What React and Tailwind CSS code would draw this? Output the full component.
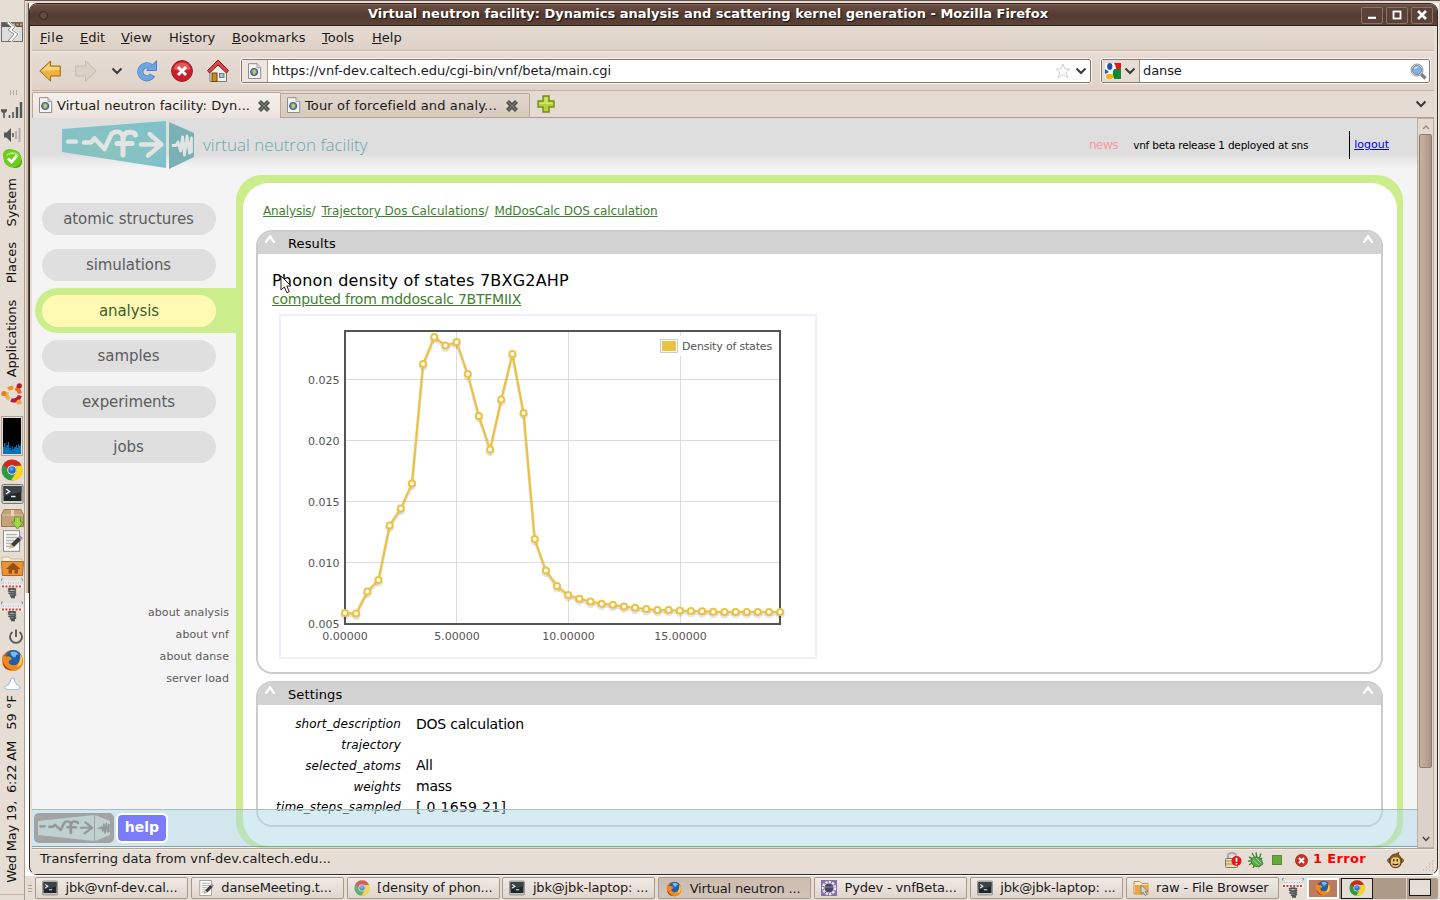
import React from "react";

/* ---------- icons ---------- */

const Chrome = ({ className = "h-4 w-4" }) => (
  <svg viewBox="0 0 22 22" className={className}>
    <circle cx="11" cy="11" r="10.5" fill="#2f9a3f" />
    <path d="M2 6A10.5 10.5 0 0 1 20.5 6.5H11A4.6 4.6 0 0 0 6.6 10Z" fill="#d8231f" />
    <path d="M20.7 6.5A10.5 10.5 0 0 1 10 21.5L15 13.5A4.6 4.6 0 0 0 14 7.2Z" fill="#fbd51b" />
    <circle cx="11" cy="11" r="4.8" fill="#dfe9ee" />
    <circle cx="11" cy="11" r="3.8" fill="#2d6fc4" />
    <circle cx="10.4" cy="10" r="2" fill="#5b9be4" />
  </svg>
);

const Terminal = ({ className = "h-4 w-4" }) => (
  <svg viewBox="0 0 22 20" className={className}>
    <rect x="0.5" y="0.5" width="21" height="19" rx="1.5" fill="#d3d5d0" stroke="#73756f" />
    <rect x="2" y="2" width="18" height="15" fill="#20262a" />
    <path d="M2 2H20V8L2 12Z" fill="#3b4347" />
    <path d="M4.5 5L8 7.5L4.5 10M9.5 12.5H14" stroke="#f0f0f0" strokeWidth="1.5" fill="none" />
  </svg>
);

const Firefox = ({ className = "h-4 w-4" }) => (
  <svg viewBox="0 0 22 22" className={className}>
    <circle cx="11" cy="11" r="10" fill="#d9601a" />
    <circle cx="12" cy="8.5" r="7.5" fill="#1f5fae" />
    <path d="M9 3Q14 1 17 5Q14 5 14 8Q10 8 9 3Z" fill="#79b8e8" />
    <path d="M2 5Q3 8 7 7Q11 8 10 10Q6 11 8 14Q12 17 16 14Q19 11 18 5Q23 10 20 16Q16 22 10 21Q3 20 1.2 13Q0.5 8 2 5Z" fill="#ec8a1e" />
    <path d="M18.5 5Q22 10 19 15Q17 17 15 17Q19 12 18.5 5Z" fill="#fbd04a" />
    <path d="M2 12Q4 19 11 20Q5 21 2.5 16Z" fill="#b83914" />
  </svg>
);

const Spring = ({ className = "h-5 w-5.5" }) => (
  <svg viewBox="0 0 22 20" className={className}>
    <path d="M2 0.5H0.5V2.5M20 0.5H21.5V2.5" stroke="#6d9fd2" fill="none" />
    <path d="M3 2H19L22 8H0Z" fill="#e9ebeb" />
    <path d="M0 8H22" stroke="#f4f4f4" strokeWidth="3.4" />
    <path d="M1 8H21" stroke="#dc3b36" strokeWidth="1.8" strokeDasharray="2 1.4" />
    <path d="M2 4.5H20" stroke="#a9b0b1" strokeDasharray="1 1.5" />
    <path d="M7 11Q11 9.5 15 11M7 12Q11 14.5 15 12M7.5 14.5Q11 16.5 15 14M9 17Q12 18.5 15 16M10 18.9H14" stroke="#4f5557" strokeWidth="1.9" fill="none" />
  </svg>
);

const Notepad = ({ className = "h-4 w-4" }) => (
  <svg viewBox="0 0 22 22" className={className}>
    <rect x="2.5" y="0.7" width="16" height="20.6" fill="#fbfbf8" stroke="#8c8e89" />
    <path d="M5 4.5H16M5 7.5H16M5 10.5H13M5 13.5H11M5 16.5H10" stroke="#b5b5b2" strokeWidth="1.3" />
    <path d="M8.5 18.5L10 14L17 7L20 10L13 17Z" fill="#3c3c3c" />
    <path d="M17 7L19 5.2L21.8 8L20 10Z" fill="#a978c0" />
    <path d="M8.5 18.5L10 14L13 17Z" fill="#e3c08a" />
  </svg>
);

const PageGlobe = () => (
  <svg viewBox="0 0 15 17" className="h-[17px] w-[15px] shrink-0">
    <path d="M1.5 0.7H10L13.7 4.5V15.5H1.5Z" fill="#f4f4f2" stroke="#8d8f8a" />
    <path d="M10 0.7V4.7H14" fill="#dcdcdc" stroke="#8d8f8a" strokeWidth="0.8" />
    <circle cx="7.2" cy="9" r="3.6" fill="#6d86b4" stroke="#3f5486" strokeWidth="1" />
    <path d="M5.6 7.2Q8 5.8 8.5 7.6Q10 9 8 10.8Q7 12.5 6.4 11Q5 9 5.6 7.2Z" fill="#c5cc4c" />
  </svg>
);

const Chevron = () => (
  <svg viewBox="0 0 12 8" className="h-2 w-3 shrink-0">
    <path d="M1.5 1.5L6 6L10.5 1.5" fill="none" stroke="#3a3a38" strokeWidth="2" />
  </svg>
);

const CloseX = () => (
  <svg viewBox="0 0 14 14" className="h-3.5 w-3.5 shrink-0">
    <path d="M2.5 2.5L11.5 11.5M11.5 2.5L2.5 11.5" stroke="#4c4f4b" strokeWidth="4.2" />
    <path d="M3 3L11 11M11 3L3 11" stroke="#777a75" strokeWidth="1.2" />
  </svg>
);

const Folder = ({ className }) => (
  <svg viewBox="0 0 23 21" className={className}>
    <path d="M1 2H8L10 4H21V9H1Z" fill="#f4efe6" stroke="#c9a97a" strokeWidth="0.8" />
    <path d="M0.5 6.5H22.5L21.5 20.5H1.5Z" fill="#e8943a" stroke="#b8651b" />
    <path d="M12 7.5L19.5 14H17V18.5H13.5V15H11V18.5H7.5V14H5Z" fill="#9a5014" />
  </svg>
);

const LogoMarks = ({ stroke }) => (
  <g fill="none" stroke={stroke} strokeLinecap="round" strokeLinejoin="round">
    <path d="M6 20.7H14" strokeWidth="4.2" />
    <path d="M22 21.5H29L32.5 17.5L42.5 28L49.5 13Q52.5 10 57 11Q61 13 61 18" strokeWidth="4.6" />
    <path d="M61 34V18.5Q61.5 11 68 11.2Q73.5 11.6 73.5 14M55 22.5H70" strokeWidth="5" />
    <path d="M79 23.5H99M87.5 13L99.5 23.5L86 34.5" strokeWidth="4.4" />
    <path d="M111 24.5H114L116 21L118.5 30L120.5 16L122.5 34L125 15L127.5 32L129.5 17V31" strokeWidth="2.8" />
  </g>
);

const Logo = () => (
  <svg viewBox="0 0 133 49" className="h-[49px] w-[133px]">
    <defs>
      <radialGradient id="teal" cx="0.45" cy="0.55" r="0.6">
        <stop offset="0" stopColor="#8bc4bc" />
        <stop offset="1" stopColor="#80c1c9" />
      </radialGradient>
    </defs>
    <path d="M0 8L104 0V47L0 31Z" fill="url(#teal)" />
    <path d="M107 1L132 12V36L107 48Z" fill="#79b1b4" />
    <LogoMarks stroke="#e2e3e3" />
  </svg>
);

/* ---------- desktop panel on the left ---------- */

const VText = ({ className, children }) => (
  <div className={`flex shrink-0 items-center justify-center text-[13px] leading-6 whitespace-pre text-[#111] ${className}`}>
    <span className="rotate-180 [writing-mode:vertical-rl]">{children}</span>
  </div>
);

const SidePanel = () => (
  <aside className="flex h-full w-[25px] shrink-0 flex-col items-center overflow-hidden border-r border-[#b09c8c] bg-[#e6ddd5]">
    <svg viewBox="0 0 22 20" className="mt-[22px] h-5 w-[22px] shrink-0">
      <rect x="0.5" y="0.5" width="21" height="19" fill="#dcdedc" stroke="#6e716f" />
      <rect x="1" y="1" width="20" height="4" fill="#565c60" />
      <path d="M12 2.5H14M15.5 2.5H17.5M19 2.5H21" stroke="#e7a43c" strokeWidth="2" />
      <path d="M7 0L13 5L10 8L16 12L10 19" fill="none" stroke="#fff" strokeWidth="3" />
      <path d="M8 0L14 5L11 8L17 12L11 19M5 0.5L10 5L7 8L13 12L7 19" fill="none" stroke="#8e918e" />
    </svg>
    <div className="mt-12 mb-1.5 flex h-[5px] shrink-0 gap-0.5 pl-0.5">
      <i className="w-px bg-[#bba594]" /><i className="w-px bg-[#bba594]" /><i className="w-px bg-[#bba594]" />
    </div>
    <svg viewBox="0 0 22 18" className="h-[18px] w-[22px] shrink-0">
      <path d="M0 9H6M0.5 9.5L3 12L5.5 9.5M3 9V17M8.5 14V17M12 11V17" stroke="#555753" strokeWidth="1.6" fill="none" />
      <path d="M16 6V17M20 1V17" stroke="#555753" strokeWidth="2.4" />
    </svg>
    <svg viewBox="0 0 18 16" className="mt-2 h-4 w-[18px] shrink-0">
      <path d="M1 5.5H3.5L8 1V15L3.5 10.5H1Z" fill="#555753" />
      <path d="M10 6V10" stroke="#555753" strokeWidth="1.5" />
      <path d="M13 4V12M16.5 1V15" stroke="#b5aea8" strokeWidth="2" />
    </svg>
    <svg viewBox="0 0 21 21" className="mt-[5px] h-[21px] w-[21px] shrink-0">
      <rect x="1" y="1" width="13" height="13" rx="6" fill="#6fc51c" />
      <rect x="7" y="7" width="13" height="13" rx="6" fill="#4fae10" />
      <circle cx="10.5" cy="10.5" r="9" fill="#70cc1d" />
      <path d="M4 8A7 6 0 0 1 17 8Q10 4 4 8Z" fill="#b8ec7c" />
      <path d="M6 10.5L9.5 14L15 7.5" fill="none" stroke="#fff" strokeWidth="2.8" />
    </svg>
    <VText className="mt-[9px] h-12">System</VText>
    <VText className="mt-4 h-[42px]">Places</VText>
    <VText className="mt-4 h-[77px] tracking-[-0.18px]">Applications</VText>
    <svg viewBox="0 0 22 22" className="mt-1.5 h-[22px] w-[22px] shrink-0">
      <g fill="none" strokeWidth="4">
        <path d="M7.2 6.2A6.3 6.3 0 0 1 12.2 4.8" stroke="#f0932b" />
        <path d="M14.5 5.2A6.3 6.3 0 0 1 18.8 10.5" stroke="#ea6a20" />
        <path d="M18.8 12.5A6.3 6.3 0 0 1 10 17" stroke="#b01c36" />
        <path d="M8.3 16A6.3 6.3 0 0 1 6 9" stroke="#f6ad4d" />
      </g>
      <circle cx="2.8" cy="10.5" r="2.6" fill="#e97c2c" />
      <circle cx="18.3" cy="2.8" r="2.6" fill="#b01c36" />
      <circle cx="18" cy="19" r="2.6" fill="#f6a24a" />
    </svg>
    <svg viewBox="0 0 22 40" className="mt-[11px] h-10 w-[22px] shrink-0">
      <rect x="0.5" y="0.5" width="21" height="39" fill="#e6ddd5" stroke="#b5a193" />
      <rect x="2" y="2" width="18" height="36" fill="#000" />
      <path d="M2 38V31H3V27H4V33L5 25L6 33V29H7V26H8V32H9V28L10 34H11V30H12V33H13V31H15V29H16V32H17V28H18V30H19V25L20 31V38Z" fill="#0772b5" />
    </svg>
    <Chrome className="mt-[3px] h-[22px] w-[22px] shrink-0" />
    <Terminal className="mt-[3px] h-5 w-[23px] shrink-0" />
    <svg viewBox="0 0 23 21" className="mt-[5px] h-[21px] w-[23px] shrink-0">
      <path d="M3 0.5H20L22.5 6V17.5H0.5V6Z" fill="#c5a37a" stroke="#9b7b54" />
      <path d="M1 6H22" stroke="#dcc39f" />
      <path d="M10 1H13V7H10Z" fill="#e7d8bc" />
      <path d="M13.5 8H19.5V13H22.5L16.5 20L10.5 13H13.5Z" fill="#a4d44a" stroke="#5f9a1e" />
    </svg>
    <Notepad className="h-[22px] w-[22px] shrink-0" />
    <Folder className="mt-[3px] h-[21px] w-[23px] shrink-0" />
    <Spring className="mt-0.5 h-[21px] w-[22px] shrink-0" />
    <Spring className="mt-0.5 h-[21px] w-[22px] shrink-0" />
    <svg viewBox="0 0 16 16" className="mt-[7px] ml-2 h-4 w-4 shrink-0">
      <path d="M4.5 3A6 6 0 1 0 11.5 3M8 0.5V8" fill="none" stroke="#555753" strokeWidth="1.8" />
    </svg>
    <Firefox className="mt-1 h-[23px] w-[23px] shrink-0" />
    <svg viewBox="0 0 17 14" className="mt-[5px] h-3.5 w-[17px] shrink-0">
      <path d="M3 12.5Q0 11.5 1 9.5Q3 8.5 4.5 7.5Q5 5 6.5 4.5Q6 1 8.5 1Q11 1 10.5 4.5Q12 5 12.5 7.5Q15.5 8.5 16 10.5Q15.5 12.5 14 12.5Z" fill="#fdfeff" stroke="#a9c1e4" strokeWidth="1.2" />
    </svg>
    <VText className="mt-1 h-[34px]">59 °F</VText>
    <VText className="mt-[11px] h-[143px] tracking-[-0.2px]">{"Wed May 19,  6:22 AM"}</VText>
    <div className="mt-[11px] h-px w-6 shrink-0 bg-[#c6b5a6]" />
  </aside>
);

/* ---------- browser chrome ---------- */

const TitleButton = ({ children }) => (
  <span className="flex h-[17px] w-[22px] items-center justify-center rounded-xs border border-[#8a7267] bg-[#5b4238]">
    <svg viewBox="0 0 12 12" className="h-3 w-3">{children}</svg>
  </span>
);

const TitleBar = () => (
  <div className="flex h-[22px] shrink-0 items-center rounded-t-md border-t border-b border-t-[#7d6054] border-b-[#2c1f1a] bg-linear-to-b from-[#6e4f43] via-[#523b33] to-[#5c4338] pl-[9px]">
    <span className="h-[9px] w-[9px] shrink-0 rounded-full border-[1.5px] border-[#382720] bg-[#654c42]" />
    <div className="flex-1 pb-[3px] pl-[7px] text-center text-[13px] leading-[17px] font-bold whitespace-nowrap text-white [text-shadow:1px_1px_1px_#1c1310]">
      Virtual neutron facility: Dynamics analysis and scattering kernel generation - Mozilla Firefox
    </div>
    <div className="flex gap-[3px] pr-1">
      <TitleButton><path d="M2 8.8H10" stroke="#fff" strokeWidth="2.2" /></TitleButton>
      <TitleButton><rect x="2.5" y="2.5" width="7" height="7" fill="none" stroke="#fff" strokeWidth="1.8" /></TitleButton>
      <TitleButton><path d="M2 2L10 10M10 2L2 10" stroke="#fff" strokeWidth="2.6" /></TitleButton>
    </div>
  </div>
);

const MenuBar = () => (
  <div className="flex h-[25px] shrink-0 items-center border-b border-[#c9b7a9] bg-linear-to-b from-[#e6dbd2] to-[#ddd1c7] pl-2 text-[13px] text-[#1a1a1a]">
    <span className="w-10 tracking-[0.5px]"><u>F</u>ile</span>
    <span className="w-[41px]"><u>E</u>dit</span>
    <span className="w-12"><u>V</u>iew</span>
    <span className="w-[63px]">Hi<u>s</u>tory</span>
    <span className="w-[90px] tracking-[0.1px]"><u>B</u>ookmarks</span>
    <span className="w-[50px]"><u>T</u>ools</span>
    <span><u>H</u>elp</span>
  </div>
);

const NavBar = () => (
  <div className="flex h-10 shrink-0 items-center border-t border-b border-t-[#f1e9e2] border-b-[#c3b0a2] bg-linear-to-b from-[#e6dcd4] to-[#dfd3c9] pl-[7px]">
    <svg viewBox="0 0 22 22" className="h-[22px] w-[22px]">
      <path d="M0.8 11L11.5 1V6H21.3V16H11.5V21Z" fill="#eeb33c" stroke="#9b6c12" />
      <path d="M2.5 11L10.5 3.5V7H20.3V10Z" fill="#f8d47d" />
    </svg>
    <svg viewBox="0 0 22 22" className="ml-3.5 h-[22px] w-[22px]">
      <path d="M21.2 11L10.5 1V6H0.7V16H10.5V21Z" fill="#dcd1c7" stroke="#c6bbb0" />
    </svg>
    <div className="ml-3.5 flex w-3"><Chevron /></div>
    <svg viewBox="0 0 22 22" className="ml-3 h-[22px] w-[22px]">
      <path d="M15.5 6.5A6.5 6.5 0 1 0 17.5 15" fill="none" stroke="#4d84c6" strokeWidth="6.2" />
      <path d="M21.5 0.8V10.5H11.5Z" fill="#6ca5e0" stroke="#4d84c6" />
      <path d="M15.5 6.5A6.5 6.5 0 1 0 17 15.5" fill="none" stroke="#6ca5e0" strokeWidth="4.8" />
    </svg>
    <svg viewBox="0 0 22 22" className="ml-3.5 h-[22px] w-[22px]">
      <circle cx="11" cy="11" r="10.4" fill="#cc1f2c" stroke="#98131c" />
      <path d="M2.5 9A8.8 8.8 0 0 1 19.5 9Q11 13 2.5 9Z" fill="#e25a5e" />
      <path d="M7 7L15 15M15 7L7 15" stroke="#fff" strokeWidth="3" />
    </svg>
    <svg viewBox="0 0 22 24" className="ml-3.5 h-6 w-[22px]">
      <path d="M3 11V22.5H19.5V11L11 3Z" fill="#f1f0ec" stroke="#77786f" />
      <rect x="5" y="14" width="5" height="8.5" fill="#c8881c" stroke="#70490b" />
      <rect x="12.5" y="14.5" width="4.5" height="4" fill="#9ec3dc" stroke="#5f6a70" strokeWidth="0.8" />
      <path d="M11 1L21.5 11.5L19.5 14L11 6L2.5 14L0.5 11.5Z" fill="#d4474a" stroke="#98181b" />
    </svg>
    <div className="ml-3 flex h-[24px] w-[850px] items-center rounded-xs border border-[#8a7768] bg-white outline outline-[#f8f3ee]">
      <div className="mr-1 flex h-full w-[26px] items-center justify-center border-r border-[#b3a294] bg-[#eee6df]"><PageGlobe /></div>
      <span className="flex-1 text-[13px] tracking-[-0.03px] text-[#1a1a1a]">https://vnf-dev.caltech.edu/cgi-bin/vnf/beta/main.cgi</span>
      <svg viewBox="0 0 16 16" className="h-4 w-4">
        <path d="M8 1L10 6H15L11.2 9.3L12.8 14.7L8 11.6L3.2 14.7L4.8 9.3L1 6H6Z" fill="#fff" stroke="#cfcfcf" />
      </svg>
      <div className="mr-[3px] ml-1 flex"><Chevron /></div>
    </div>
    <div className="ml-2.5 flex h-[24px] w-[329px] items-center rounded-xs border border-[#8a7768] bg-white outline outline-[#f8f3ee]">
      <div className="flex h-full w-[38px] items-center gap-[3px] border-r border-[#a58e7c] bg-[#e6ddd5] pl-[3px]">
        <svg viewBox="0 0 16 16" className="h-4 w-4">
          <rect width="16" height="16" rx="1" fill="#fff" />
          <path d="M9 0H16V6H11Q11 3 9 0Z" fill="#e7141a" />
          <path d="M9 6H16V16H9Q7 12 8 8Z" fill="#0c8a38" />
          <ellipse cx="4.8" cy="3.4" rx="2.6" ry="3.4" fill="#1b50b4" />
          <path d="M0 6L4 9L0 11Z" fill="#1b50b4" />
          <ellipse cx="4.6" cy="13.4" rx="3.8" ry="2.6" fill="#f5b011" />
        </svg>
        <Chevron />
      </div>
      <span className="flex-1 pl-[3px] text-[13px] tracking-[-0.1px] text-[#1a1a1a]">danse</span>
      <svg viewBox="0 0 17 17" className="mr-0.5 h-[17px] w-[17px]">
        <path d="M10.5 10.5L15.5 15.5" stroke="#80807c" strokeWidth="3.2" />
        <circle cx="7" cy="7" r="6" fill="#e4e6e4" stroke="#85898a" strokeWidth="0.9" />
        <circle cx="7" cy="7" r="4.5" fill="#86b2e2" stroke="#54749c" strokeWidth="0.8" />
        <path d="M4 6.5A3.2 3.2 0 0 1 9 4Q6 4.5 4 6.5Z" fill="#d8e9f8" />
      </svg>
    </div>
  </div>
);

const TabBar = () => (
  <div className="flex h-[27px] shrink-0 items-end bg-[#e5dbd2] shadow-[inset_0_-1px_0_#b09a8a]">
    <div className="flex h-[26px] w-[249px] items-center rounded-t-xs border border-b-0 border-[#b8a596] bg-linear-to-b from-[#f5f0ec] to-[#ece3dc] pl-[5px]">
      <PageGlobe />
      <span className="ml-1 flex-1 text-[13px] tracking-[0.07px] whitespace-nowrap text-[#1a1a1a]">Virtual neutron facility: Dyn...</span>
      <div className="mr-[9px]"><CloseX /></div>
    </div>
    <div className="flex h-[25px] w-[249px] items-center rounded-tr-xs border border-l-0 border-[#b8a596] bg-linear-to-b from-[#e2d7cd] to-[#d6cabe] pl-[5px]">
      <PageGlobe />
      <span className="ml-1 flex-1 text-[13px] tracking-[0.14px] whitespace-nowrap text-[#1a1a1a]">Tour of forcefield and analy...</span>
      <div className="mr-2.5"><CloseX /></div>
    </div>
    <svg viewBox="0 0 18 18" className="mb-[5px] ml-[7px] h-[18px] w-[18px]">
      <path d="M6 1H12V6H17V12H12V17H6V12H1V6H6Z" fill="#b6d33c" stroke="#6f8f1c" strokeWidth="1.4" />
      <path d="M7.5 2.5H10.5V7.5H15.5V9H2.5V7.5H7.5Z" fill="#d2e56c" />
    </svg>
    <div className="mr-[7px] mb-2.5 ml-auto flex"><Chevron /></div>
  </div>
);

const Scrollbar = () => (
  <div className="flex w-[17px] shrink-0 flex-col border border-[#c0ae9f] bg-[#dcd2c9]">
    <div className="flex h-[15px] items-center justify-center bg-[#e3d9d0]">
      <svg viewBox="0 0 8 6" className="h-1.5 w-2"><path d="M1 5L4 2L7 5" fill="none" stroke="#9c8c80" strokeWidth="1.3" /></svg>
    </div>
    <div className="mx-px h-[634px] rounded-xs border border-[#8f7c6d] bg-linear-to-r from-[#c5b3a4] via-[#b9a697] to-[#a79483]" />
    <div className="mt-auto flex h-[17px] items-center justify-center">
      <svg viewBox="0 0 8 6" className="h-1.5 w-2"><path d="M0.8 1L4 4.4L7.2 1" fill="none" stroke="#4a433d" strokeWidth="1.5" /></svg>
    </div>
  </div>
);

/* ---------- web page ---------- */

const PageHeader = () => (
  <header className="flex h-[57px] shrink-0 items-start bg-[linear-gradient(#dedede_36px,#e6e6e6_41px,#f4f4f4_50px)] pl-[30px]">
    <div className="mt-[3px]"><Logo /></div>
    <span className="mt-[13px] ml-2 font-['Open_Sans',sans-serif] text-[17px] leading-7 font-light text-[#6ba6b0]">virtual neutron facility</span>
    <span className="mt-[19px] ml-auto text-[12px] leading-4 tracking-[-0.45px] text-[#f79c9c]">news</span>
    <span className="mt-[19px] ml-[15px] text-[10.5px] leading-4 tracking-[-0.2px] text-black">vnf beta release 1 deployed at sns</span>
    <span className="mt-[13px] ml-[41px] h-7 border-l border-black" />
    <a className="mt-[19px] mr-[28px] ml-1 text-[11px] leading-4 text-[#0000ee] underline">logout</a>
  </header>
);

const NavPill = ({ className = "", children }) => (
  <a className={`flex h-8 w-[174px] items-center justify-center rounded-full bg-[#dfdfdf] pt-px pr-px text-[15px] tracking-[-0.08px] text-[#5c5c5c] ${className}`}>
    {children}
  </a>
);

const Sidebar = () => (
  <nav className="flex w-[204px] shrink-0 flex-col pt-7">
    <NavPill className="ml-2.5">atomic structures</NavPill>
    <NavPill className="mt-3.5 ml-2.5">simulations</NavPill>
    <div className="mt-[7px] ml-[3px] flex h-[45px] items-center rounded-l-full bg-[#cbed8b] pl-[7px]">
      <a className="flex h-8 w-[174px] items-center justify-center rounded-full bg-[#fff9b4] pt-px text-[15px] tracking-[-0.08px] text-[#3a5f30]">analysis</a>
    </div>
    <NavPill className="mt-[7px] ml-2.5">samples</NavPill>
    <NavPill className="mt-3.5 ml-2.5">experiments</NavPill>
    <NavPill className="mt-[13px] ml-2.5">jobs</NavPill>
    <div className="mt-[139px] flex flex-col items-end pr-[7px] text-[11px] leading-[22px] tracking-[0.09px] text-[#5a5a5a]">
      <a>about analysis</a>
      <a>about vnf</a>
      <a>about danse</a>
      <a>server load</a>
    </div>
  </nav>
);

const Caret = () => (
  <svg viewBox="0 0 12 8" className="mt-[3px] h-2 w-3">
    <path d="M1.5 7.8L6 1.5L10.5 7.8" fill="none" stroke="#fff" strokeWidth="2.4" />
  </svg>
);

const Panel = ({ title, className, children }) => (
  <section className={`flex flex-col overflow-hidden rounded-[16px] border-2 border-[#ccc] bg-white ${className}`}>
    <div className="flex h-[22px] shrink-0 items-start bg-[#d2d2d2] pr-[7px] pl-1.5">
      <Caret />
      <h2 className="ml-3 flex-1 text-[13px] leading-6 tracking-[0.12px] text-black">{title}</h2>
      <Caret />
    </div>
    {children}
  </section>
);

const POINTS = [
  613, 613.5, 591.5, 580, 525.5, 508.5, 483.5, 364, 337, 345.5, 342, 374, 416, 449.5, 399.5, 354, 413, 539, 570.5, 586,
  595, 598.7, 601.5, 603.7, 604.8, 606.5, 607.7, 609, 610, 610, 610.5, 611, 611.3, 611.7, 612, 612, 612, 612, 612, 612,
].map((y, i) => [345 + i * 11.16, y]);
const LINE = POINTS.map((p) => p.join(",")).join(" ");

const Chart = () => (
  <svg viewBox="281 316 534 341" className="ml-[21px] h-[345px] w-[538px] border-2 border-[#eef]" fontFamily="'DejaVu Sans', sans-serif" fontSize="11">
    <path d="M456.5 331V624M568.5 331V624M680.5 331V624M345 379.5H780M345 440.5H780M345 501.5H780M345 562.5H780" stroke="#dcdcdc" fill="none" />
    <rect x="657" y="336" width="119" height="20" fill="#fff" />
    <rect x="345" y="331" width="435" height="293" fill="none" stroke="#545454" strokeWidth="2" />
    <g fill="none" stroke="#000" strokeOpacity="0.1" strokeWidth="3" transform="translate(0 2)">
      <polyline points={LINE} />
      {POINTS.map(([x, y]) => <circle key={x} cx={x} cy={y} r="3" />)}
    </g>
    <polyline points={LINE} fill="none" stroke="#edc240" strokeWidth="2.2" />
    {POINTS.map(([x, y]) => <circle key={x} cx={x} cy={y} r="3" fill="#fff" stroke="#edc240" strokeWidth="2" />)}
    <g fill="#545454" textAnchor="end">
      <text x="339.5" y="384">0.025</text>
      <text x="339.5" y="445">0.020</text>
      <text x="339.5" y="506">0.015</text>
      <text x="339.5" y="567">0.010</text>
      <text x="339.5" y="628">0.005</text>
    </g>
    <g fill="#545454" textAnchor="middle">
      <text x="345" y="640">0.00000</text>
      <text x="457" y="640">5.00000</text>
      <text x="568.5" y="640">10.00000</text>
      <text x="680.5" y="640">15.00000</text>
    </g>
    <rect x="660.5" y="339.5" width="17" height="13" fill="#fff" stroke="#ccc" />
    <rect x="662" y="341" width="14" height="10" fill="#edc240" />
    <text x="682" y="350" fill="#545454" letterSpacing="-0.18">Density of states</text>
  </svg>
);

const SETTINGS = [
  ["short_description", "DOS calculation"],
  ["trajectory", ""],
  ["selected_atoms", "All"],
  ["weights", "mass"],
];

const SettingRow = ({ label, children }) => (
  <div className="flex h-[20.75px] items-center">
    <span className="w-[143px] text-right text-[12px] tracking-[0.13px] text-black italic">{label}</span>
    {children}
  </div>
);

const Content = () => (
  <main className="mr-3.5 flex w-[1167px] flex-col rounded-[26px] bg-[#cbed8b] pt-2 pr-1.5 pb-0.5 pl-[7px]">
    <div className="flex flex-1 flex-col rounded-[26px] bg-white pl-[13px]">
      <div className="mt-5 flex h-4 items-center pl-[7px] text-[12px] leading-4 text-[#3f8130]">
        <a className="tracking-[-0.12px] underline">Analysis</a><span>/</span>
        <a className="ml-1.5 underline">Trajectory Dos Calculations</a><span>/</span>
        <a className="ml-1.5 tracking-[-0.1px] underline">MdDosCalc DOS calculation</a>
      </div>
      <Panel title="Results" className="mt-[11px] h-[444px] w-[1127px]">
        <div className="relative mt-[17px] ml-3.5 w-fit text-[16px] leading-[19px] tracking-[0.2px] text-black">
          Phonon density of states 7BXG2AHP
          <svg viewBox="0 0 12 19" className="absolute top-[4px] left-2 h-[19px] w-3">
            <path d="M1 1V15L4.3 12L6.8 17.8L9.3 16.7L6.8 11H11Z" fill="#fff" stroke="#222" />
          </svg>
        </div>
        <a className="ml-3.5 text-[14px] leading-[18px] tracking-[-0.24px] text-[#3f8130] underline">computed from mddoscalc 7BTFMIIX</a>
        <div className="mt-1.5 flex"><Chart /></div>
      </Panel>
      <Panel title="Settings" className="mt-[7px] h-[146px] w-[1127px]">
        <div className="mt-[9px]">
          {SETTINGS.map(([label, value]) => (
            <SettingRow key={label} label={label}>
              <span className="ml-[15px] text-[14px] tracking-[-0.22px] text-black">{value}</span>
            </SettingRow>
          ))}
          <SettingRow label="time_steps_sampled">
            <span className="ml-[15px] text-[14px] tracking-[0.3px] text-black">[ 0 1659 21]</span>
          </SettingRow>
        </div>
      </Panel>
    </div>
  </main>
);

const HelpBar = () => (
  <div className="absolute inset-x-0 bottom-px flex h-[38px] items-center gap-[3px] border-t border-b border-t-[#a8bcc0] border-b-[#7fa3ad] bg-[#add8e6]/50 pb-px pl-0.5">
    <svg viewBox="0 0 80 30" className="h-[30px] w-20">
      <rect width="80" height="30" rx="5" fill="#a2a4a4" />
      <path d="M4 8L60 2V28L4 22ZM61 2L76 8V22L61 28Z" fill="#bfd0d0" />
      <g transform="translate(3 3) scale(0.555 0.5)"><LogoMarks stroke="#929898" /></g>
    </svg>
    <span className="-ml-px flex h-[30px] w-[52px] items-center justify-center rounded-md border-2 border-white bg-[#7b7bfb] text-[14px] font-bold text-white">help</span>
  </div>
);

/* ---------- status bar and taskbar ---------- */

const StatusBar = () => (
  <div className="flex h-[26px] shrink-0 items-center border-t border-[#b5a394] bg-[#e6ddd5] pl-2 text-[13px] text-[#1a1a1a] shadow-[inset_0_1px_0_#f3ede8]">
    <span className="flex-1 pb-1.5 tracking-[0.04px]">Transferring data from vnf-dev.caltech.edu...</span>
    <svg viewBox="0 0 17 16" className="mb-[3px] h-4 w-[17px]">
      <path d="M3 7V3.5Q3 1 7 1Q11 1 11 3.5V7" fill="none" stroke="#a8a8a4" strokeWidth="2" />
      <rect x="0.5" y="6.5" width="12" height="9" rx="1" fill="#ecdfa5" stroke="#777" />
      <path d="M1 9H12M1 12H12" stroke="#a58a3a" />
      <circle cx="11.5" cy="9" r="5" fill="#e0161c" />
      <path d="M11.5 5.8V9.8M11.5 11V12.4" stroke="#fff" strokeWidth="1.7" />
    </svg>
    <svg viewBox="0 0 17 17" className="mb-[3px] ml-[5px] h-[17px] w-[17px]">
      <path d="M2 5L6 7M5 1L8 6M9 0.5L10 6M14 1.5L12 7M1 9H5M2 13L6 10M6 16L8 12M15 6L13 9" stroke="#3e8e30" strokeWidth="1.4" />
      <path d="M4 7Q9 3 14 7L16 12L12 15L7 14Q4 12 4 7Z" fill="#58a949" stroke="#2f7524" strokeWidth="0.8" />
      <path d="M6 8L12 13M9 6L14 11" stroke="#a4d892" />
    </svg>
    <span className="mb-[3px] ml-2 h-2.5 w-2.5 border border-[#5b8b35] bg-[#68a83c]" />
    <svg viewBox="0 0 13 13" className="mb-[3px] ml-[13px] h-[13px] w-[13px]">
      <circle cx="6.5" cy="6.5" r="6" fill="#c8342a" stroke="#93211b" strokeWidth="0.8" />
      <path d="M4 4L9 9M9 4L4 9" stroke="#fff" strokeWidth="2" />
    </svg>
    <b className="ml-[5px] pb-1.5 tracking-[0.34px] text-[#f00]">1 Error</b>
    <svg viewBox="0 0 17 17" className="mb-[3px] ml-[21px] h-[17px] w-[17px]">
      <circle cx="2.5" cy="8.5" r="2" fill="#b07430" stroke="#4a2c10" strokeWidth="0.7" />
      <circle cx="14.5" cy="8.5" r="2" fill="#b07430" stroke="#4a2c10" strokeWidth="0.7" />
      <path d="M2.5 7Q4 2 9 2L12 0.5L11 2.5Q14 4 14.5 8Q15 15.5 8.5 15.8Q2 15.5 2.5 7Z" fill="#8c5a22" stroke="#4a2c10" strokeWidth="0.8" />
      <path d="M4 8Q5 4.5 8.5 5.6Q12 4.5 13 8Q14 14.8 8.5 14.9Q3 14.8 4 8Z" fill="#f2c878" />
      <path d="M6.8 7V9.5M10.2 7V9.5M5.5 11.8Q8.5 13.8 11.5 11.8" fill="none" stroke="#2c1a08" strokeWidth="1.2" />
    </svg>
    <svg viewBox="0 0 12 12" className="mt-1.5 ml-[18px] h-3 w-3">
      <path d="M1 11H12M4 8H12M7 5H12M10 2H12" stroke="#b5a496" strokeDasharray="1 2" />
    </svg>
  </div>
);

const Eclipse = () => (
  <svg viewBox="0 0 16 16" className="h-4 w-4">
    <rect width="16" height="16" fill="#8672a8" />
    <circle cx="8" cy="8" r="6" fill="#3a3156" stroke="#e8e6ee" strokeWidth="2.4" strokeDasharray="2.4 1" />
    <circle cx="8" cy="8" r="5" fill="#4a4168" stroke="#dcd9e4" />
    <path d="M4 7H12" stroke="#8d88a5" />
  </svg>
);

const FileBrowser = () => (
  <svg viewBox="0 0 17 16" className="h-4 w-[17px]">
    <path d="M1 1.5H7L9 3.5H15V14H1Z" fill="#f7eedd" stroke="#c39445" />
    <path d="M2 5H15V14.5H2Z" fill="#eba944" />
    <path d="M8 5V14L10 12L12 15.5L14 14.5L12 11.2H15Z" fill="#d4d6d4" stroke="#76797a" strokeWidth="0.8" />
  </svg>
);

const TaskButton = ({ icon, active, children }) => (
  <div className={`flex h-[22px] w-[153px] shrink-0 items-center rounded-xs border border-[#a99a8e] ${active ? "bg-linear-to-b from-[#cdbdb0] to-[#d2c4b9] pt-px pl-[7px]" : "bg-linear-to-b from-[#f0e9e4] to-[#e0d6ce] pl-1.5"}`}>
    <span className="flex w-[23.5px] shrink-0">{icon}</span>
    <span className="text-[13px] tracking-[-0.17px] whitespace-nowrap text-[#1a1a1a]">{children}</span>
  </div>
);

const Taskbar = () => (
  <footer className="flex h-6 shrink-0 items-center overflow-hidden bg-[#e6ddd5]">
    <div className="flex w-2.5 shrink-0 flex-col items-center gap-0.5">
      <i className="h-px w-1 bg-[#b5a293]" /><i className="h-px w-1 bg-[#b5a293]" /><i className="h-px w-1 bg-[#b5a293]" />
    </div>
    <div className="flex shrink-0 gap-[2.8px]">
      <TaskButton icon={<Terminal />}>jbk@vnf-dev.cal...</TaskButton>
      <TaskButton icon={<Notepad />}>danseMeeting.t...</TaskButton>
      <TaskButton icon={<Chrome className="h-4 w-4 opacity-70" />}>[density of phon...</TaskButton>
      <TaskButton icon={<Terminal />}>jbk@jbk-laptop: ...</TaskButton>
      <TaskButton icon={<Firefox />} active>Virtual neutron ...</TaskButton>
      <TaskButton icon={<Eclipse />}>Pydev - vnfBeta...</TaskButton>
      <TaskButton icon={<Terminal />}>jbk@jbk-laptop: ...</TaskButton>
      <TaskButton icon={<FileBrowser />}>raw - File Browser</TaskButton>
    </div>
    <Spring className="ml-[3px] h-5 w-[22px] shrink-0" />
    <div className="ml-[3px] flex h-[21px] w-[131px] shrink-0 gap-0.5 rounded-xs bg-[#ad9a88]">
      <div className="flex w-8 items-center justify-center border-2 border-white bg-[#bd7a5e]"><Firefox className="h-4 w-4" /></div>
      <div className="flex w-8 items-center justify-center border border-[#1a1a1a] bg-[#e6ddd5]"><Chrome className="h-4 w-4" /></div>
      <div className="w-8 border-r border-[#e0d5ca]" />
      <div className="mt-px h-[17px] w-[22px] border border-[#1a1a1a] bg-[#e6ddd5]" />
    </div>
  </footer>
);

export default function App() {
  return (
    <div className="flex h-[900px] w-[1440px] overflow-hidden bg-white font-['DejaVu_Sans',sans-serif]">
      <SidePanel />
      <div className="flex min-w-0 flex-1 flex-col">
        <div className="h-[3px] shrink-0 border-t border-[#6b5248] bg-[#e6dbd3]" />
        <div className="flex h-[872px] shrink-0">
          <div className="h-[590px] w-1 border-r border-l border-r-[#5a4a42] border-l-[#eee7e1] bg-[#cbbcae]" />
          <div className="flex h-[872px] w-[1409px] flex-col rounded-lg border border-[#332a26] bg-[#e6ddd5]">
            <TitleBar />
            <div className="flex min-h-0 flex-1 flex-col pr-[3px] pl-0.5">
              <MenuBar />
              <NavBar />
              <TabBar />
              <div className="flex h-[730px] shrink-0">
                <div className="relative flex w-[1385px] shrink-0 flex-col bg-[#f4f4f4]">
                  <PageHeader />
                  <div className="flex min-h-0 flex-1">
                    <Sidebar />
                    <Content />
                  </div>
                  <HelpBar />
                </div>
                <Scrollbar />
              </div>
              <StatusBar />
            </div>
          </div>
          <div className="flex-1 border-l border-[#f2ece7] bg-[#dfd4ca]" />
        </div>
        <div className="h-px shrink-0 bg-white" />
        <Taskbar />
      </div>
    </div>
  );
}
